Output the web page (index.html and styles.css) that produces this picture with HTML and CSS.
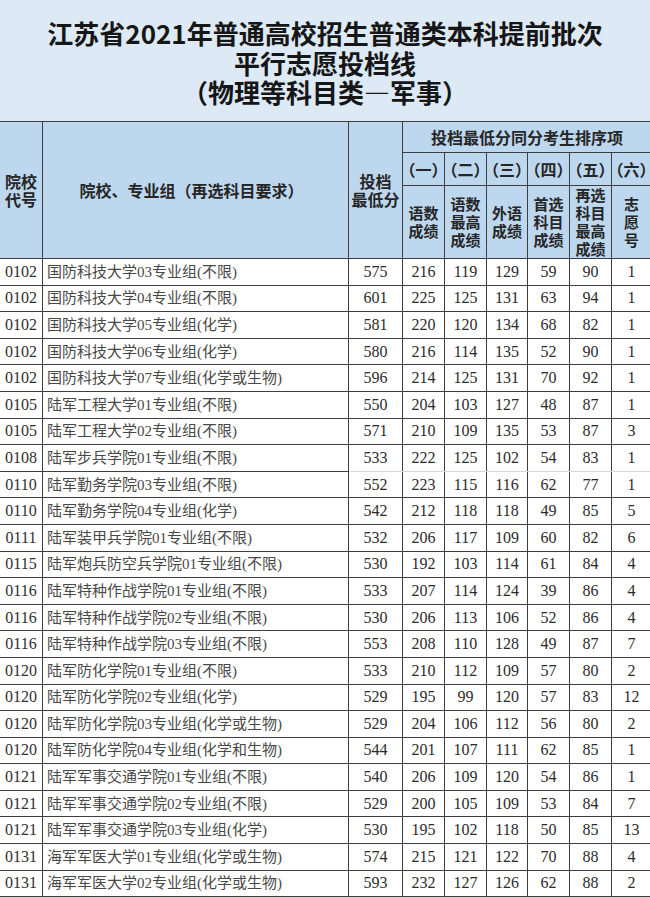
FILE: index.html
```html
<!DOCTYPE html>
<html lang="zh-CN">
<head>
<meta charset="utf-8">
<title>江苏省2021年普通高校招生普通类本科提前批次平行志愿投档线</title>
<link rel="stylesheet" href="styles.css">
</head>
<body>
<div class="title">
  <div>江苏省2021年普通高校招生普通类本科提前批次</div>
  <div>平行志愿投档线</div>
  <div>（物理等科目类—军事）</div>
</div>
<table class="score">
  <colgroup>
    <col class="c-code"><col class="c-name"><col class="c-min">
    <col class="c-n"><col class="c-n"><col class="c-n4"><col class="c-n"><col class="c-n"><col class="c-n6">
  </colgroup>
  <thead>
    <tr class="h1">
      <th rowspan="3">院校<br>代号</th>
      <th rowspan="3" class="th-name">院校、专业组（再选科目要求）</th>
      <th rowspan="3">投档<br>最低分</th>
      <th colspan="6">投档最低分同分考生排序项</th>
    </tr>
    <tr class="h2">
      <th class="par">（一）</th><th class="par">（二）</th><th class="par">（三）</th><th class="par">（四）</th><th class="par">（五）</th><th class="par">（六）</th>
    </tr>
    <tr class="h3">
      <th>语数<br>成绩</th>
      <th>语数<br>最高<br>成绩</th>
      <th>外语<br>成绩</th>
      <th>首选<br>科目<br>成绩</th>
      <th>再选<br>科目<br>最高<br>成绩</th>
      <th>志<br>愿<br>号</th>
    </tr>
  </thead>
  <tbody>
    <tr><td class="code">0102</td><td class="name">国防科技大学03专业组(不限)</td><td>575</td><td>216</td><td>119</td><td>129</td><td>59</td><td>90</td><td>1</td></tr>
    <tr><td class="code">0102</td><td class="name">国防科技大学04专业组(不限)</td><td>601</td><td>225</td><td>125</td><td>131</td><td>63</td><td>94</td><td>1</td></tr>
    <tr><td class="code">0102</td><td class="name">国防科技大学05专业组(化学)</td><td>581</td><td>220</td><td>120</td><td>134</td><td>68</td><td>82</td><td>1</td></tr>
    <tr><td class="code">0102</td><td class="name">国防科技大学06专业组(化学)</td><td>580</td><td>216</td><td>114</td><td>135</td><td>52</td><td>90</td><td>1</td></tr>
    <tr><td class="code">0102</td><td class="name">国防科技大学07专业组(化学或生物)</td><td>596</td><td>214</td><td>125</td><td>131</td><td>70</td><td>92</td><td>1</td></tr>
    <tr><td class="code">0105</td><td class="name">陆军工程大学01专业组(不限)</td><td>550</td><td>204</td><td>103</td><td>127</td><td>48</td><td>87</td><td>1</td></tr>
    <tr><td class="code">0105</td><td class="name">陆军工程大学02专业组(不限)</td><td>571</td><td>210</td><td>109</td><td>135</td><td>53</td><td>87</td><td>3</td></tr>
    <tr class="open"><td class="code">0108</td><td class="name">陆军步兵学院01专业组(不限)</td><td>533</td><td>222</td><td>125</td><td>102</td><td>54</td><td>83</td><td>1</td></tr>
    <tr><td class="code">0110</td><td class="name">陆军勤务学院03专业组(不限)</td><td>552</td><td>223</td><td>115</td><td>116</td><td>62</td><td>77</td><td>1</td></tr>
    <tr><td class="code">0110</td><td class="name">陆军勤务学院04专业组(化学)</td><td>542</td><td>212</td><td>118</td><td>118</td><td>49</td><td>85</td><td>5</td></tr>
    <tr><td class="code">0111</td><td class="name">陆军装甲兵学院01专业组(不限)</td><td>532</td><td>206</td><td>117</td><td>109</td><td>60</td><td>82</td><td>6</td></tr>
    <tr><td class="code">0115</td><td class="name">陆军炮兵防空兵学院01专业组(不限)</td><td>530</td><td>192</td><td>103</td><td>114</td><td>61</td><td>84</td><td>4</td></tr>
    <tr><td class="code">0116</td><td class="name">陆军特种作战学院01专业组(不限)</td><td>533</td><td>207</td><td>114</td><td>124</td><td>39</td><td>86</td><td>4</td></tr>
    <tr><td class="code">0116</td><td class="name">陆军特种作战学院02专业组(不限)</td><td>530</td><td>206</td><td>113</td><td>106</td><td>52</td><td>86</td><td>4</td></tr>
    <tr><td class="code">0116</td><td class="name">陆军特种作战学院03专业组(不限)</td><td>553</td><td>208</td><td>110</td><td>128</td><td>49</td><td>87</td><td>7</td></tr>
    <tr><td class="code">0120</td><td class="name">陆军防化学院01专业组(不限)</td><td>533</td><td>210</td><td>112</td><td>109</td><td>57</td><td>80</td><td>2</td></tr>
    <tr><td class="code">0120</td><td class="name">陆军防化学院02专业组(化学)</td><td>529</td><td>195</td><td>99</td><td>120</td><td>57</td><td>83</td><td>12</td></tr>
    <tr><td class="code">0120</td><td class="name">陆军防化学院03专业组(化学或生物)</td><td>529</td><td>204</td><td>106</td><td>112</td><td>56</td><td>80</td><td>2</td></tr>
    <tr><td class="code">0120</td><td class="name">陆军防化学院04专业组(化学和生物)</td><td>544</td><td>201</td><td>107</td><td>111</td><td>62</td><td>85</td><td>1</td></tr>
    <tr><td class="code">0121</td><td class="name">陆军军事交通学院01专业组(不限)</td><td>540</td><td>206</td><td>109</td><td>120</td><td>54</td><td>86</td><td>1</td></tr>
    <tr><td class="code">0121</td><td class="name">陆军军事交通学院02专业组(不限)</td><td>529</td><td>200</td><td>105</td><td>109</td><td>53</td><td>84</td><td>7</td></tr>
    <tr><td class="code">0121</td><td class="name">陆军军事交通学院03专业组(化学)</td><td>530</td><td>195</td><td>102</td><td>118</td><td>50</td><td>85</td><td>13</td></tr>
    <tr><td class="code">0131</td><td class="name">海军军医大学01专业组(化学或生物)</td><td>574</td><td>215</td><td>121</td><td>122</td><td>70</td><td>88</td><td>4</td></tr>
    <tr><td class="code">0131</td><td class="name">海军军医大学02专业组(化学或生物)</td><td>593</td><td>232</td><td>127</td><td>126</td><td>62</td><td>88</td><td>2</td></tr>
  </tbody>
</table>
</body>
</html>
```
FILE: styles.css
```css
html, body {
  margin: 0;
  padding: 0;
  overflow: hidden;
  background: #ddeaf6;
}

.title {
  box-sizing: border-box;
  height: 121px;
  padding-top: 18px;
  font-family: "Noto Sans CJK SC", sans-serif;
  font-weight: 700;
  font-size: 26px;
  line-height: 29.5px;
  text-align: center;
  color: #161616;
}

.score {
  border-collapse: collapse;
  table-layout: fixed;
  width: 652px;
  margin-left: -1px;
  background: #fff;
}

.c-code { width: 43px; }
.c-name { width: 306px; }
.c-min { width: 54px; }
.c-n { width: 42px; }
.c-n4 { width: 41px; }
.c-n6 { width: 40px; }

.score th,
.score td {
  border: 1px solid #3e3e3e;
  padding: 0;
  overflow: hidden;
  white-space: nowrap;
}

.score th {
  background: #bdd7ee;
  font-family: "Noto Sans CJK SC", sans-serif;
  font-weight: 700;
  font-size: 15px;
  line-height: 18px;
  color: #262626;
  text-align: center;
  vertical-align: middle;
}

.score .h1 { height: 31px; }
.score .h2 { height: 33px; }
.score .h3 { height: 72px; }

.score .h1 th { font-size: 16px; }

.score .par {
  font-size: 16px;
  font-feature-settings: "halt";
}

.score .th-name {
  font-size: 15px;
  padding-right: 8px;
}

.score tbody tr { height: 26.6px; }

.score td {
  font-family: "Liberation Serif", "Noto Sans CJK SC", serif;
  font-size: 16px;
  line-height: 18px;
  color: #2b2b2b;
  text-align: center;
  vertical-align: middle;
}

.score td.code {
  color: #303030;
}

.score td.name {
  text-align: left;
  padding-left: 4px;
  font-size: 15px;
  color: #484848;
}

.score tr.open td:nth-child(n+3) {
  border-bottom-color: #d8d8d8;
}
```
